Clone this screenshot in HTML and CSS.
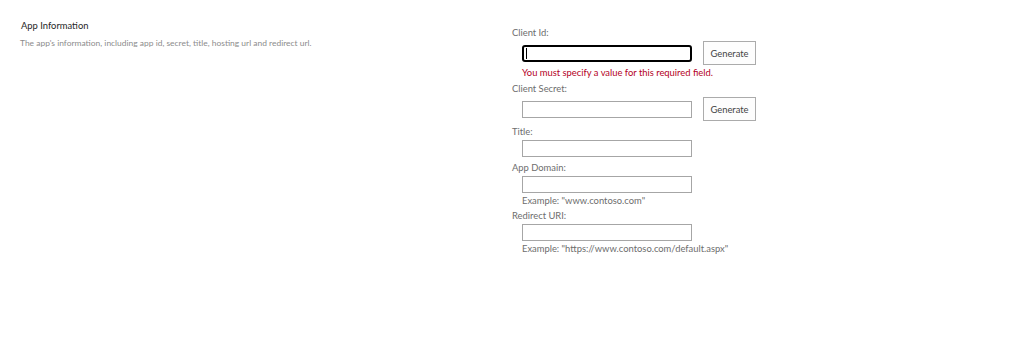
FILE: index.html
```html
<!DOCTYPE html>
<html lang="en">
<head>
    <meta charset="UTF-8">
    <title>App Information</title>
    <link rel="stylesheet" href="styles.css">
</head>
<body>
    <div class="form-section">
        <div class="section-head">
            <h3 class="section-title">App Information</h3>
            <p class="section-desc">The app's information, including app id, secret, title, hosting url and redirect url.</p>
        </div>

        <div class="section-body">
            <div class="field-label">Client Id:</div>
            <div class="field-row">
                <span class="input-wrap">
                    <input type="text" class="field-input is-focused">
                    <span class="caret"></span>
                </span>
                <button class="gen-button">Generate</button>
            </div>
            <div class="field-error">You must specify a value for this required field.</div>

            <div class="field-label">Client Secret:</div>
            <div class="field-row">
                <input type="text" class="field-input">
                <button class="gen-button">Generate</button>
            </div>

            <div class="field-label spaced">Title:</div>
            <div class="field-row plain">
                <input type="text" class="field-input">
            </div>

            <div class="field-label">App Domain:</div>
            <div class="field-row plain">
                <input type="text" class="field-input">
            </div>
            <div class="field-hint">Example: "www.contoso.com"</div>

            <div class="field-label">Redirect URI:</div>
            <div class="field-row plain">
                <input type="text" class="field-input">
            </div>
            <div class="field-hint">Example: "https://www.contoso.com/default.aspx"</div>
        </div>
    </div>
</body>
</html>
```

FILE: styles.css
```css
* {
    margin: 0;
    padding: 0;
    box-sizing: border-box;
}

body {
    font-family: Lato, 'Open Sans', sans-serif;
    background: #fff;
    color: #666;
    font-size: 9.4px;
}

.form-section {
    display: flex;
    padding-top: 18px;
}

.section-head {
    width: 512px;
    padding-left: 20px;
}

.section-title {
    font-size: 9.4px;
    font-weight: normal;
    color: #262626;
    line-height: 16px;
    padding-left: 1px;
}

.section-desc {
    font-size: 8.45px;
    color: #8c8c8c;
    line-height: 14px;
    margin-top: 2px;
}

.section-body {
    padding-top: 7px;
}

.field-label {
    line-height: 16px;
    color: #6d6d6d;
}

.field-label.spaced {
    margin-top: 3px;
}

.field-row {
    display: flex;
    align-items: center;
    height: 24px;
    padding-left: 10px;
}

.field-row.plain {
    height: 17px;
}

.input-wrap {
    position: relative;
    display: flex;
}

.field-input {
    width: 170px;
    height: 17px;
    border: 1px solid #a6a6a6;
    background: #fff;
    font: inherit;
}

.field-input.is-focused {
    border: 2px solid #000;
    border-radius: 3px;
}

.caret {
    position: absolute;
    left: 4px;
    top: 3px;
    width: 1px;
    height: 11px;
    background: #000;
}

.gen-button {
    width: 53px;
    height: 24px;
    margin-left: 11px;
    border: 1px solid #ababab;
    background: #fdfdfd;
    font: inherit;
    color: #444;
}

.field-error {
    line-height: 16px;
    padding-left: 10px;
    color: #b4001e;
}

.field-row.plain + .field-label {
    margin-top: 3px;
}

.field-hint {
    line-height: 15px;
    padding-left: 10px;
    color: #6d6d6d;
}
```
